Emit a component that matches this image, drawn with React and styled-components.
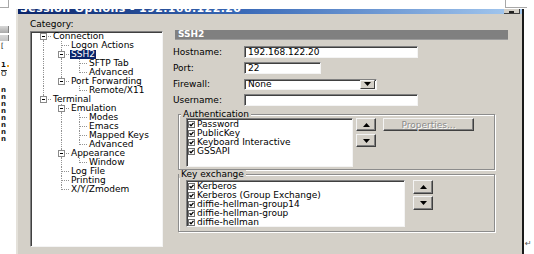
import styled, { createGlobalStyle } from "styled-components"

const GlobalStyle = createGlobalStyle`
  html, body { margin: 0; padding: 0; background: #fff; }
  body {
    font-family: "DejaVu Sans", sans-serif;
    font-size: 9px;
    color: #000;
  }
`

const tree = [
  { label: "Connection", children: [
    { label: "Logon Actions" },
    { label: "SSH2", selected: true, children: [{ label: "SFTP Tab" }, { label: "Advanced" }] },
    { label: "Port Forwarding", children: [{ label: "Remote/X11" }] },
  ] },
  { label: "Terminal", children: [
    { label: "Emulation", children: [
      { label: "Modes" }, { label: "Emacs" }, { label: "Mapped Keys" }, { label: "Advanced" },
    ] },
    { label: "Appearance", children: [{ label: "Window" }] },
    { label: "Log File" },
    { label: "Printing" },
    { label: "X/Y/Zmodem" },
  ] },
]

function flatten(nodes, guides = [], depth = 0, rows = []) {
  nodes.forEach((node, i) => {
    const isLast = i === nodes.length - 1
    let joint = isLast ? "last" : "middle"
    if (depth === 0 && i === 0) joint = "first"
    rows.push({ label: node.label, selected: node.selected, guides, joint, open: !!node.children })
    if (node.children) flatten(node.children, [...guides, !isLast], depth + 1, rows)
  })
  return rows
}

const authMethods = ["Password", "PublicKey", "Keyboard Interactive", "GSSAPI"]
const kexMethods = [
  "Kerberos",
  "Kerberos (Group Exchange)",
  "diffie-hellman-group14",
  "diffie-hellman-group",
  "diffie-hellman",
]

function Guide({ kind, open }) {
  return (
    <svg width="18" height="9" viewBox="0 0 18 9">
      <g stroke="#939393" strokeDasharray="1 1" shapeRendering="crispEdges">
        {kind === "pipe" && <line x1="9.5" y1="0" x2="9.5" y2="9" />}
        {kind === "middle" && <line x1="9.5" y1="0" x2="9.5" y2="9" />}
        {kind === "last" && <line x1="9.5" y1="0" x2="9.5" y2="5" />}
        {kind === "first" && <line x1="9.5" y1="4" x2="9.5" y2="9" />}
        {["middle", "last", "first"].includes(kind) && <line x1="10" y1="4.5" x2="18" y2="4.5" />}
      </g>
      {open && (
        <g shapeRendering="crispEdges">
          <rect x="6.5" y="1.5" width="6" height="6" fill="#fff" stroke="#8a8a8a" />
          <line x1="8" y1="4.5" x2="11" y2="4.5" stroke="#000" />
        </g>
      )}
    </svg>
  )
}

function Check() {
  return (
    <svg width="7" height="7" viewBox="0 0 7 7">
      <rect x="0.5" y="0.5" width="6" height="6" fill="#fff" stroke="#707070" shapeRendering="crispEdges" />
      <path d="M1.6 3.3 L3 4.8 L5.5 1.8" fill="none" stroke="#000" strokeWidth="1.3" />
    </svg>
  )
}

function Arrow({ down }) {
  return (
    <svg width="7" height="4" viewBox="0 0 7 4">
      <polygon points={down ? "0,0 7,0 3.5,4" : "3.5,0 7,4 0,4"} fill="#000" />
    </svg>
  )
}

export default function App() {
  const rows = flatten(tree)
  const nLetters = Array.from({ length: 8 })

  return (
    <Screen>
      <GlobalStyle />
      <TopStrip>
        <CornerBox />
        <CornerBox $right />
      </TopStrip>

      <MainRow>
        <LeftStrip>
          <Chip $top={17} $h={7} $tone="#a9a9a9" />
          <Chip $top={2} $h={6} $tone="#c4c4c4" />
          <Glyph $top={2}>[</Glyph>
          <Glyph $top={12} $bold>1<Dot /></Glyph>
          <Glyph $top={1} $over>O</Glyph>
          <NColumn>
            {nLetters.map((_, i) => <Glyph key={i} $top={0} $bold>n</Glyph>)}
          </NColumn>
        </LeftStrip>

        <Window>
          <TitleBar>
            <TitleText>Session Options - 192.168.122.20</TitleText>
            <TitleButton><span /></TitleButton>
          </TitleBar>

          <Body>
            <CategoryColumn>
              <Caption>Category:</Caption>
              <TreePanel>
                {rows.map((r, i) => (
                  <TreeRow key={i}>
                    {r.guides.map((g, j) => <Guide key={j} kind={g ? "pipe" : "blank"} />)}
                    <Guide kind={r.joint} open={r.open} />
                    <TreeLabel $selected={r.selected}>{r.label}</TreeLabel>
                  </TreeRow>
                ))}
              </TreePanel>
            </CategoryColumn>

            <SettingsColumn>
              <SectionHeader>SSH2</SectionHeader>

              <Form>
                <FieldLabel>Hostname:</FieldLabel>
                <TextBox $w={174}>192.168.122.20</TextBox>
                <FieldLabel>Port:</FieldLabel>
                <TextBox $w={77}>22</TextBox>
                <FieldLabel>Firewall:</FieldLabel>
                <TextBox $w={133} $h={11}>
                  <span>None</span>
                  <DropButton><Arrow down /></DropButton>
                </TextBox>
                <FieldLabel>Username:</FieldLabel>
                <TextBox $w={174} />
              </Form>

              <Group $gap={8}>
                <GroupTitle $indent={2}>Authentication</GroupTitle>
                <GroupRow $pad={2}>
                  <ListBox $w={167} $h={49}>
                    {authMethods.map((m) => (
                      <ListItem key={m}><Check />{m}</ListItem>
                    ))}
                  </ListBox>
                  <ArrowStack $gap={3} $ml={3}>
                    <SmallButton $h={13}><Arrow /></SmallButton>
                    <SmallButton $h={13}><Arrow down /></SmallButton>
                  </ArrowStack>
                  <PushButton disabled>Properties...</PushButton>
                </GroupRow>
              </Group>

              <Group $gap={4}>
                <GroupTitle $indent={0}>Key exchange</GroupTitle>
                <GroupRow $pad={4} $top={2}>
                  <ListBox $w={219} $h={47}>
                    {kexMethods.map((m) => (
                      <ListItem key={m}><Check />{m}</ListItem>
                    ))}
                  </ListBox>
                  <ArrowStack $gap={2} $ml={8}>
                    <SmallButton $h={14}><Arrow /></SmallButton>
                    <SmallButton $h={14}><Arrow down /></SmallButton>
                  </ArrowStack>
                </GroupRow>
              </Group>
            </SettingsColumn>
          </Body>
        </Window>

        <RightStrip>
          <ReturnMark>↵</ReturnMark>
        </RightStrip>
      </MainRow>
    </Screen>
  )
}

const Screen = styled.div`
  width: 534px;
  height: 254px;
  overflow: hidden;
  background: #fff;
  display: flex;
  flex-direction: column;
`
const TopStrip = styled.div`
  height: 9px;
  display: flex;
  justify-content: space-between;
  align-items: flex-start;
  padding-right: 7px;
`
const CornerBox = styled.div`
  width: ${(p) => (p.$right ? 21 : 8)}px;
  height: 7px;
  background: #fff;
  border-bottom: 1px solid #a8a8a8;
  border-${(p) => (p.$right ? "left" : "right")}: 1px solid #a8a8a8;
`
const MainRow = styled.div`
  flex: 1;
  display: flex;
  min-height: 0;
`
const LeftStrip = styled.div`
  width: 16px;
  display: flex;
  flex-direction: column;
  align-items: flex-start;
`
const Chip = styled.div`
  margin-top: ${(p) => p.$top}px;
  width: 8px;
  height: ${(p) => p.$h}px;
  background: linear-gradient(#d8d8d8, ${(p) => p.$tone});
  border-right: 1px solid #808080;
`
const Glyph = styled.span`
  margin-top: ${(p) => p.$top}px;
  margin-left: 1px;
  display: flex;
  align-items: center;
  height: 7px;
  font-size: 7px;
  line-height: 7px;
  font-weight: ${(p) => (p.$bold ? 700 : 400)};
  color: #111;
  ${(p) => p.$over && "border-top: 1px solid #333;"}
`
const Dot = styled.i`
  width: 2px;
  height: 2px;
  margin-left: 1px;
  background: #f0a020;
`
const NColumn = styled.div`
  margin-top: 9px;
  display: flex;
  flex-direction: column;
`
const Window = styled.div`
  width: 504px;
  display: flex;
  flex-direction: column;
  border-left: 2px solid #e4e1da;
  border-right: 2px solid #1a1a1a;
`
const TitleBar = styled.div`
  height: 5px;
  overflow: hidden;
  display: flex;
  justify-content: space-between;
  align-items: flex-start;
  padding-right: 2px;
  background: linear-gradient(to right, #0a246a, #3a6ab8 45%, #a6caf0);
`
const TitleText = styled.div`
  margin-top: -6px;
  padding-left: 2px;
  font-size: 11px;
  line-height: 11px;
  font-weight: 700;
  letter-spacing: 0.4px;
  color: #fff;
  white-space: nowrap;
`
const TitleButton = styled.div`
  width: 15px;
  height: 4px;
  background: #d4d0c8;
  border-bottom: 1px solid #404040;
  border-right: 1px solid #404040;
  display: flex;
  justify-content: center;
  align-items: flex-end;
  span {
    width: 5px;
    height: 2px;
    background: #222;
  }
`
const Body = styled.div`
  flex: 1;
  display: flex;
  align-items: flex-start;
  padding: 5px 0 0 12px;
  background: #d4d0c8;
`
const CategoryColumn = styled.div`
  width: 133px;
  display: flex;
  flex-direction: column;
`
const Caption = styled.div`
  line-height: 10px;
  height: 10px;
  margin-bottom: 2px;
`
const TreePanel = styled.div`
  height: 216px;
  box-sizing: border-box;
  background: #fff;
  border: 1px solid;
  border-color: #808080 #f4f4f4 #f4f4f4 #808080;
  box-shadow: inset 1px 1px 0 #404040;
  padding-left: 3px;
  display: flex;
  flex-direction: column;
`
const TreeRow = styled.div`
  display: flex;
  align-items: center;
  height: 9px;
  svg { flex: none; display: block; }
`
const TreeLabel = styled.span`
  line-height: 9px;
  height: 9px;
  padding: 0 1px;
  white-space: nowrap;
  background: ${(p) => (p.$selected ? "#0a246a" : "transparent")};
  color: ${(p) => (p.$selected ? "#fff" : "#000")};
`
const SettingsColumn = styled.div`
  width: 335px;
  margin-left: 10px;
  padding-top: 11px;
  display: flex;
  flex-direction: column;
`
const SectionHeader = styled.div`
  margin-left: 2px;
  height: 9px;
  line-height: 9px;
  padding-left: 3px;
  background: #808080;
  border-bottom: 1px solid #9c9c9c;
  color: #fff;
  font-weight: 700;
`
const Form = styled.div`
  margin-top: 6px;
  display: grid;
  grid-template-columns: 71px auto;
  grid-auto-rows: 12px;
  row-gap: 4px;
  align-items: center;
  justify-items: start;
`
const FieldLabel = styled.div`
  line-height: 10px;
`
const TextBox = styled.div`
  width: ${(p) => p.$w}px;
  height: ${(p) => p.$h || 12}px;
  box-sizing: border-box;
  background: #fff;
  border: 1px solid;
  border-color: #808080 #f4f4f4 #f4f4f4 #808080;
  box-shadow: inset 1px 1px 0 #404040;
  padding: 0 1px 0 3px;
  display: flex;
  align-items: center;
  justify-content: space-between;
  line-height: 9px;
  white-space: nowrap;
`
const DropButton = styled.div`
  width: 15px;
  height: 9px;
  box-sizing: border-box;
  background: #d4d0c8;
  border: 1px solid;
  border-color: #f4f4f4 #404040 #404040 #f4f4f4;
  display: flex;
  align-items: center;
  justify-content: center;
`
const Group = styled.div`
  margin: ${(p) => p.$gap}px 0 0 5px;
  width: 317px;
  box-sizing: border-box;
  border: 1px solid #8c8c8c;
  box-shadow: inset 1px 1px 0 #fff, 1px 1px 0 #fff;
  display: flex;
  flex-direction: column;
`
const GroupTitle = styled.div`
  align-self: flex-start;
  margin: -5px 0 0 ${(p) => p.$indent}px;
  padding: 0 2px;
  height: 8px;
  line-height: 8px;
  background: #d4d0c8;
`
const GroupRow = styled.div`
  display: flex;
  align-items: flex-start;
  padding: ${(p) => p.$top || 0}px 0 ${(p) => p.$pad}px 7px;
`
const ListBox = styled.div`
  width: ${(p) => p.$w}px;
  height: ${(p) => p.$h}px;
  box-sizing: border-box;
  background: #fff;
  border: 1px solid;
  border-color: #808080 #f4f4f4 #f4f4f4 #808080;
  box-shadow: inset 1px 1px 0 #404040;
  padding: 1px 0 0 1px;
  display: flex;
  flex-direction: column;
`
const ListItem = styled.div`
  display: flex;
  align-items: center;
  gap: 2px;
  height: 9px;
  line-height: 9px;
  white-space: nowrap;
  svg { flex: none; display: block; }
`
const ArrowStack = styled.div`
  margin-left: ${(p) => p.$ml}px;
  display: flex;
  flex-direction: column;
  gap: ${(p) => p.$gap}px;
`
const SmallButton = styled.div`
  width: 20px;
  height: ${(p) => p.$h}px;
  box-sizing: border-box;
  background: #d4d0c8;
  border: 1px solid;
  border-color: #f4f4f4 #404040 #404040 #f4f4f4;
  box-shadow: inset -1px -1px 0 #808080;
  display: flex;
  align-items: center;
  justify-content: center;
  svg { display: block; }
`
const PushButton = styled.button`
  margin-left: 7px;
  width: 91px;
  height: 13px;
  box-sizing: border-box;
  padding: 0;
  background: #d4d0c8;
  border: 1px solid;
  border-color: #f4f4f4 #404040 #404040 #f4f4f4;
  box-shadow: inset -1px -1px 0 #808080;
  font-family: "DejaVu Sans", sans-serif;
  font-size: 9px;
  line-height: 10px;
  color: #8a8a8a;
  text-shadow: 1px 1px 0 #fff;
`
const RightStrip = styled.div`
  flex: 1;
  display: flex;
  flex-direction: column;
  justify-content: flex-end;
  padding-bottom: 6px;
`
const ReturnMark = styled.span`
  font-size: 8px;
  line-height: 8px;
  color: #555;
  padding-left: 1px;
`
